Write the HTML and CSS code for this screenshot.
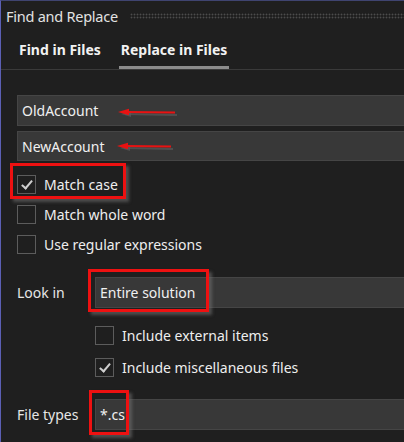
FILE: index.html
```html
<!DOCTYPE html>
<html>
<head>
<meta charset="utf-8">
<link rel="stylesheet" href="styles.css">
</head>
<body>
<div class="window">
  <div class="titlebar">
    <span class="title">Find and Replace</span>
    <span class="grip"></span>
  </div>
  <div class="tabs">
    <div class="tab">Find in Files</div>
    <div class="tab active">Replace in Files</div>
  </div>
  <div class="content">
    <div class="field first">
      <span class="value">OldAccount</span>
      <svg class="arrow" width="64" height="12" viewBox="0 0 64 12">
        <line x1="8" y1="7" x2="60" y2="8" stroke="#5a5a5a" stroke-width="2" opacity="0.7"/>
        <path d="M4 7 L14 4 L14 10 Z" fill="#5a5a5a" opacity="0.7"/>
        <line x1="8" y1="5" x2="58" y2="5.5" stroke="#e81212" stroke-width="2"/>
        <path d="M1 5 L12 1.8 L12 8.2 Z" fill="#e81212"/>
      </svg>
    </div>
    <div class="field second">
      <span class="value">NewAccount</span>
      <svg class="arrow a2" width="64" height="12" viewBox="0 0 64 12">
        <line x1="8" y1="7" x2="57" y2="8" stroke="#5a5a5a" stroke-width="2" opacity="0.7"/>
        <path d="M4 7 L14 4 L14 10 Z" fill="#5a5a5a" opacity="0.7"/>
        <line x1="8" y1="5" x2="55" y2="5.5" stroke="#e81212" stroke-width="2"/>
        <path d="M1 5 L12 1.8 L12 8.2 Z" fill="#e81212"/>
      </svg>
    </div>
    <div class="checks">
      <label class="check mark-case"><span class="box checked"></span><span>Match case</span></label>
      <label class="check"><span class="box"></span><span>Match whole word</span></label>
      <label class="check last"><span class="box"></span><span>Use regular expressions</span></label>
    </div>
    <div class="row look">
      <span class="label">Look in</span>
      <div class="field select mark-look"><span class="value">Entire solution</span></div>
    </div>
    <div class="subchecks">
      <label class="check tall"><span class="box"></span><span>Include external items</span></label>
      <label class="check tall"><span class="box checked"></span><span>Include miscellaneous files</span></label>
    </div>
    <div class="row types">
      <span class="label">File types</span>
      <div class="field select mark-types"><span class="value">*.cs</span></div>
    </div>
  </div>
</div>
</body>
</html>
```
FILE: styles.css
```css
html, body {
  margin: 0;
  padding: 0;
  background: #1f1f1f;
}
body {
  font-family: "Noto Sans", "Open Sans", sans-serif;
  color: #eeeeee;
  font-size: 14px;
  width: 404px;
  height: 442px;
  overflow: hidden;
}
.window {
  height: 441px;
  border-left: 1px solid #5b5fb4;
  border-top: 1px solid #3f4470;
  background: #1f1f1f;
}
.titlebar {
  height: 29px;
  display: flex;
  align-items: center;
  padding-left: 5px;
  gap: 12px;
}
.title {
  font-size: 14.5px;
  letter-spacing: -0.25px;
  color: #e2e2e2;
  white-space: nowrap;
}
.grip {
  flex: 1;
  height: 6px;
  background-image: radial-gradient(circle, #4c4c4c 0.8px, transparent 1.1px);
  background-size: 3px 3px;
}
.tabs {
  display: flex;
  gap: 16px;
  padding-left: 16px;
  border-bottom: 1px solid #3a3a3a;
  height: 39px;
}
.tab {
  font-weight: bold;
  font-size: 14px;
  line-height: 20px;
  padding: 10px 2px 6px;
  border-bottom: 3px solid transparent;
  color: #f2f2f2;
  white-space: nowrap;
}
.tab.active {
  border-bottom-color: #8c8c8c;
}
.content {
  padding-left: 16px;
}
.field {
  position: relative;
  height: 29px;
  background: #383838;
  border: 1px solid #454545;
  border-right: none;
  display: flex;
  align-items: center;
  padding-left: 4px;
}
.field.first { margin-top: 25px; }
.field.second { margin-top: 5px; height: 28px; }
.value {
  color: #f0f0f0;
  white-space: nowrap;
}
.arrow {
  position: absolute;
  left: 99px;
  top: 11px;
}
.arrow.a2 { left: 98px; top: 9px; }
.checks {
  margin-top: 8px;
}
.check {
  position: relative;
  display: flex;
  align-items: center;
  height: 30px;
  gap: 8px;
  white-space: nowrap;
  color: #eeeeee;
}
.check.last { height: 31px; }
.check.tall { height: 32px; }
.box {
  box-sizing: border-box;
  width: 19px;
  height: 19px;
  border: 1px solid #5c5c5c;
  background: #1f1f1f;
  position: relative;
  flex: none;
}
.box.checked::after {
  content: "";
  position: absolute;
  left: 6px;
  top: 2px;
  width: 4px;
  height: 9px;
  border-right: 2px solid #cfcfcf;
  border-bottom: 2px solid #cfcfcf;
  transform: rotate(40deg);
}
.mark-case::after,
.mark-look::after,
.mark-types::after {
  content: "";
  position: absolute;
  border: 3px solid #ee1111;
  box-shadow: 3px 3px 3px rgba(110, 110, 110, 0.6);
  pointer-events: none;
}
.mark-case::after {
  left: -7px;
  top: -6px;
  width: 110px;
  height: 30px;
}
.row {
  display: flex;
  align-items: center;
}
.row .label {
  width: 78px;
  flex: none;
  color: #e6e6e6;
  white-space: nowrap;
}
.row .field {
  flex: 1;
  padding-left: 4px;
}
.look { margin-top: 17px; }
.mark-look::after {
  left: -8px;
  top: -9px;
  width: 115px;
  height: 37px;
}
.subchecks {
  margin-top: 11px;
  padding-left: 78px;
}
.types { margin-top: 16px; }
.mark-types::after {
  left: -7px;
  top: -10px;
  width: 34px;
  height: 39px;
}
```
